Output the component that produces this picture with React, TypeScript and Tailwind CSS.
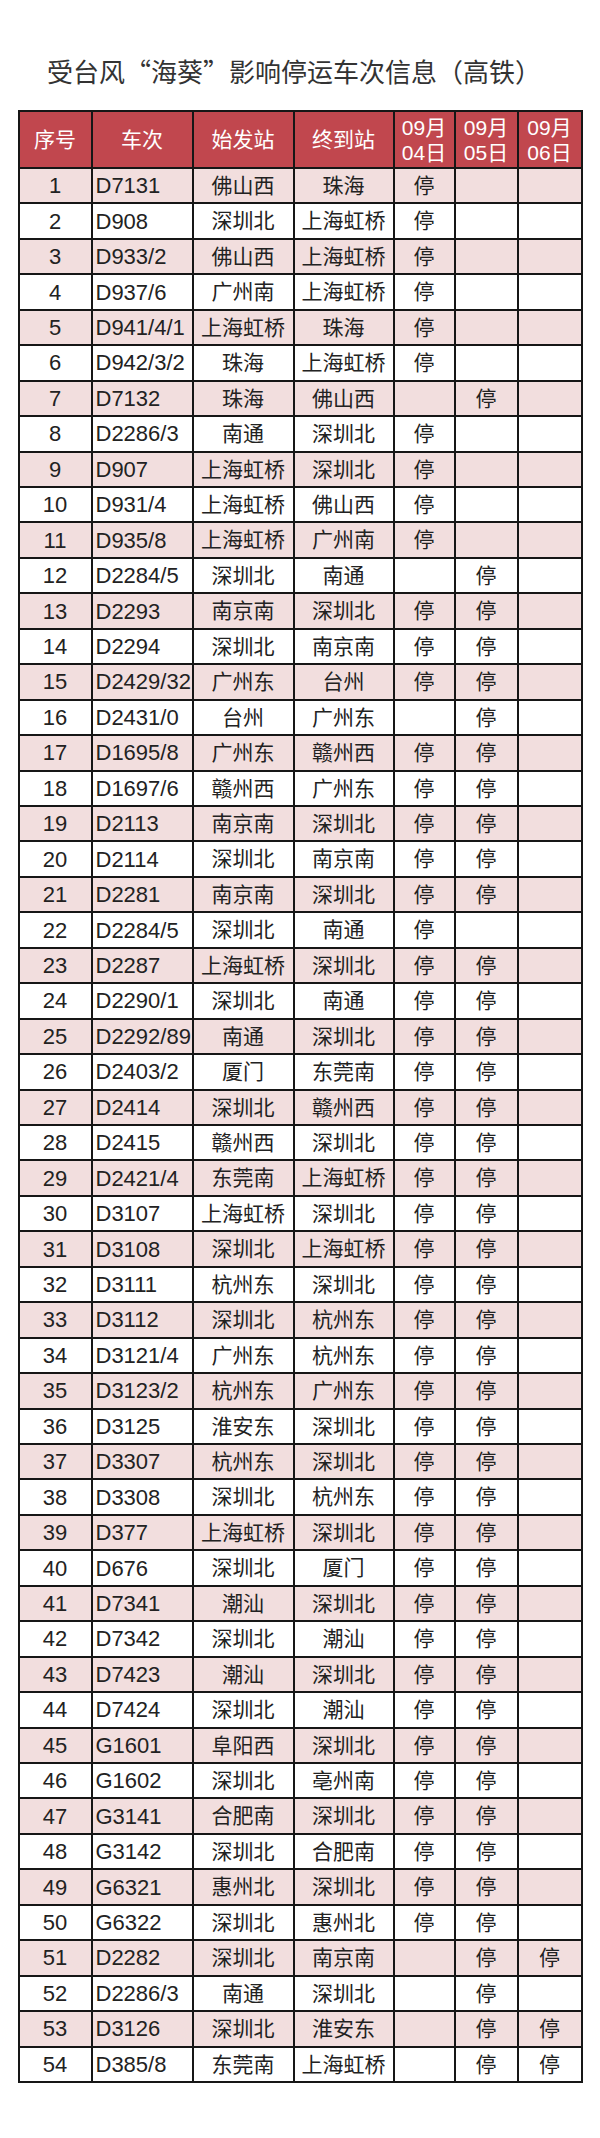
const days = ["04", "05", "06"];

// [车次, 始发站, 终到站, 停运标记(04/05/06)]
const trains: [string, string, string, string][] = [
  ["D7131", "佛山西", "珠海", "100"],
  ["D908", "深圳北", "上海虹桥", "100"],
  ["D933/2", "佛山西", "上海虹桥", "100"],
  ["D937/6", "广州南", "上海虹桥", "100"],
  ["D941/4/1", "上海虹桥", "珠海", "100"],
  ["D942/3/2", "珠海", "上海虹桥", "100"],
  ["D7132", "珠海", "佛山西", "010"],
  ["D2286/3", "南通", "深圳北", "100"],
  ["D907", "上海虹桥", "深圳北", "100"],
  ["D931/4", "上海虹桥", "佛山西", "100"],
  ["D935/8", "上海虹桥", "广州南", "100"],
  ["D2284/5", "深圳北", "南通", "010"],
  ["D2293", "南京南", "深圳北", "110"],
  ["D2294", "深圳北", "南京南", "110"],
  ["D2429/32", "广州东", "台州", "110"],
  ["D2431/0", "台州", "广州东", "010"],
  ["D1695/8", "广州东", "赣州西", "110"],
  ["D1697/6", "赣州西", "广州东", "110"],
  ["D2113", "南京南", "深圳北", "110"],
  ["D2114", "深圳北", "南京南", "110"],
  ["D2281", "南京南", "深圳北", "110"],
  ["D2284/5", "深圳北", "南通", "100"],
  ["D2287", "上海虹桥", "深圳北", "110"],
  ["D2290/1", "深圳北", "南通", "110"],
  ["D2292/89", "南通", "深圳北", "110"],
  ["D2403/2", "厦门", "东莞南", "110"],
  ["D2414", "深圳北", "赣州西", "110"],
  ["D2415", "赣州西", "深圳北", "110"],
  ["D2421/4", "东莞南", "上海虹桥", "110"],
  ["D3107", "上海虹桥", "深圳北", "110"],
  ["D3108", "深圳北", "上海虹桥", "110"],
  ["D3111", "杭州东", "深圳北", "110"],
  ["D3112", "深圳北", "杭州东", "110"],
  ["D3121/4", "广州东", "杭州东", "110"],
  ["D3123/2", "杭州东", "广州东", "110"],
  ["D3125", "淮安东", "深圳北", "110"],
  ["D3307", "杭州东", "深圳北", "110"],
  ["D3308", "深圳北", "杭州东", "110"],
  ["D377", "上海虹桥", "深圳北", "110"],
  ["D676", "深圳北", "厦门", "110"],
  ["D7341", "潮汕", "深圳北", "110"],
  ["D7342", "深圳北", "潮汕", "110"],
  ["D7423", "潮汕", "深圳北", "110"],
  ["D7424", "深圳北", "潮汕", "110"],
  ["G1601", "阜阳西", "深圳北", "110"],
  ["G1602", "深圳北", "亳州南", "110"],
  ["G3141", "合肥南", "深圳北", "110"],
  ["G3142", "深圳北", "合肥南", "110"],
  ["G6321", "惠州北", "深圳北", "110"],
  ["G6322", "深圳北", "惠州北", "110"],
  ["D2282", "深圳北", "南京南", "011"],
  ["D2286/3", "南通", "深圳北", "010"],
  ["D3126", "深圳北", "淮安东", "011"],
  ["D385/8", "东莞南", "上海虹桥", "011"],
];

const headCell =
  "flex items-center justify-center bg-[#c1474e] text-[21px] text-white";

export default function App() {
  return (
    <div className="min-h-[2138px] bg-white font-['Liberation_Sans','Noto_Sans_CJK_SC',sans-serif] text-[#222]">
      <h1 className="pl-[47px] pt-[58px] font-['Noto_Sans_CJK_SC',sans-serif] text-[26px] leading-[26px] font-normal text-[#333]">
        受台风“海葵”影响停运车次信息（高铁）
      </h1>

      <div className="mx-auto mt-[26px] grid h-[1973px] w-[565px] grid-cols-[71px_99px_99px_98px_59px_61px_62px] grid-rows-[55px_repeat(54,minmax(0,1fr))] gap-[2px] bg-[#161616] p-[2px]">
        <div className={headCell}>序号</div>
        <div className={headCell}>车次</div>
        <div className={headCell}>始发站</div>
        <div className={headCell}>终到站</div>
        {days.map((d) => (
          <div key={d} className={`${headCell} flex-col leading-[25px]`}>
            <span>09月</span>
            <span>{d}日</span>
          </div>
        ))}

        {trains.map(([train, from, to, stops], i) => {
          const bg = i % 2 === 0 ? "bg-[#f2dede]" : "bg-white";
          return [
            <div key={`n${i}`} className={`${bg} flex items-center justify-center text-[22px]`}>
              {i + 1}
            </div>,
            <div
              key={`t${i}`}
              className={`${bg} flex items-center overflow-hidden whitespace-nowrap pl-[3px] text-[22px]`}
            >
              {train}
            </div>,
            <div key={`f${i}`} className={`${bg} flex items-center justify-center whitespace-nowrap text-[21px]`}>
              {from}
            </div>,
            <div key={`o${i}`} className={`${bg} flex items-center justify-center whitespace-nowrap text-[21px]`}>
              {to}
            </div>,
            ...stops.split("").map((s, j) => (
              <div key={`s${i}-${j}`} className={`${bg} flex items-center justify-center text-[21px]`}>
                {s === "1" ? "停" : ""}
              </div>
            )),
          ];
        })}
      </div>
    </div>
  );
}
